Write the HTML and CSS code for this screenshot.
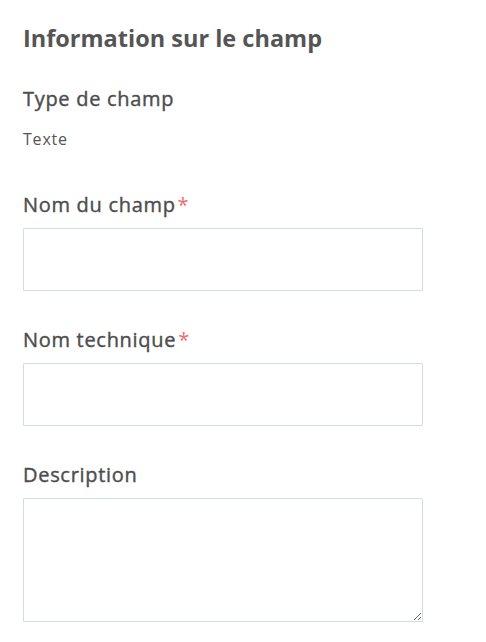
FILE: index.html
```html
<!DOCTYPE html>
<html lang="fr">
<head>
<meta charset="utf-8">
<link rel="stylesheet" href="styles.css">
</head>
<body>
<div class="panel">
  <h2 class="title">Information sur le champ</h2>
  <div class="info">
    <div class="label">Type de champ</div>
    <div class="value">Texte</div>
  </div>
  <div class="field">
    <label class="label">Nom du champ<span class="req">*</span></label>
    <input class="input" type="text">
  </div>
  <div class="field">
    <label class="label">Nom technique<span class="req">*</span></label>
    <input class="input" type="text">
  </div>
  <div class="field">
    <label class="label">Description</label>
    <textarea class="textarea"></textarea>
  </div>
</div>
</body>
</html>
```
FILE: styles.css
```css
html, body {
  margin: 0;
  padding: 0;
  background: #fff;
}
body {
  font-family: "Open Sans", Lato, sans-serif;
  color: #555;
}
.panel {
  padding: 24px 23px 0 23px;
  display: flex;
  flex-direction: column;
}
.title {
  margin: 0;
  font-size: 23.5px;
  line-height: 28px;
  font-weight: 700;
  color: #555;
}
.info {
  margin-top: 35px;
  display: flex;
  flex-direction: column;
}
.label {
  display: block;
  font-size: 20px;
  line-height: 24px;
  font-weight: 500;
  letter-spacing: 0.7px;
  color: #4d4d4d;
  -webkit-text-stroke: 0.4px #4d4d4d;
}
.value {
  margin-top: 18px;
  font-size: 16px;
  line-height: 20px;
  letter-spacing: 0.8px;
  color: #555;
}
.field {
  margin-top: 44px;
  display: flex;
  flex-direction: column;
}
.field + .field {
  margin-top: 37px;
}
.field .label {
  margin-bottom: 11px;
}
.req {
  color: #f06b6b;
  -webkit-text-stroke: 0;
  margin-left: 2px;
}
.input, .textarea {
  box-sizing: border-box;
  width: 400px;
  margin: 0;
  border: 1px solid #d3dce8;
  border-radius: 1px;
  background: #fff;
  font: inherit;
  padding: 8px 12px;
  outline: none;
}
.input {
  height: 63px;
}
.textarea {
  height: 124px;
  resize: vertical;
}
```
